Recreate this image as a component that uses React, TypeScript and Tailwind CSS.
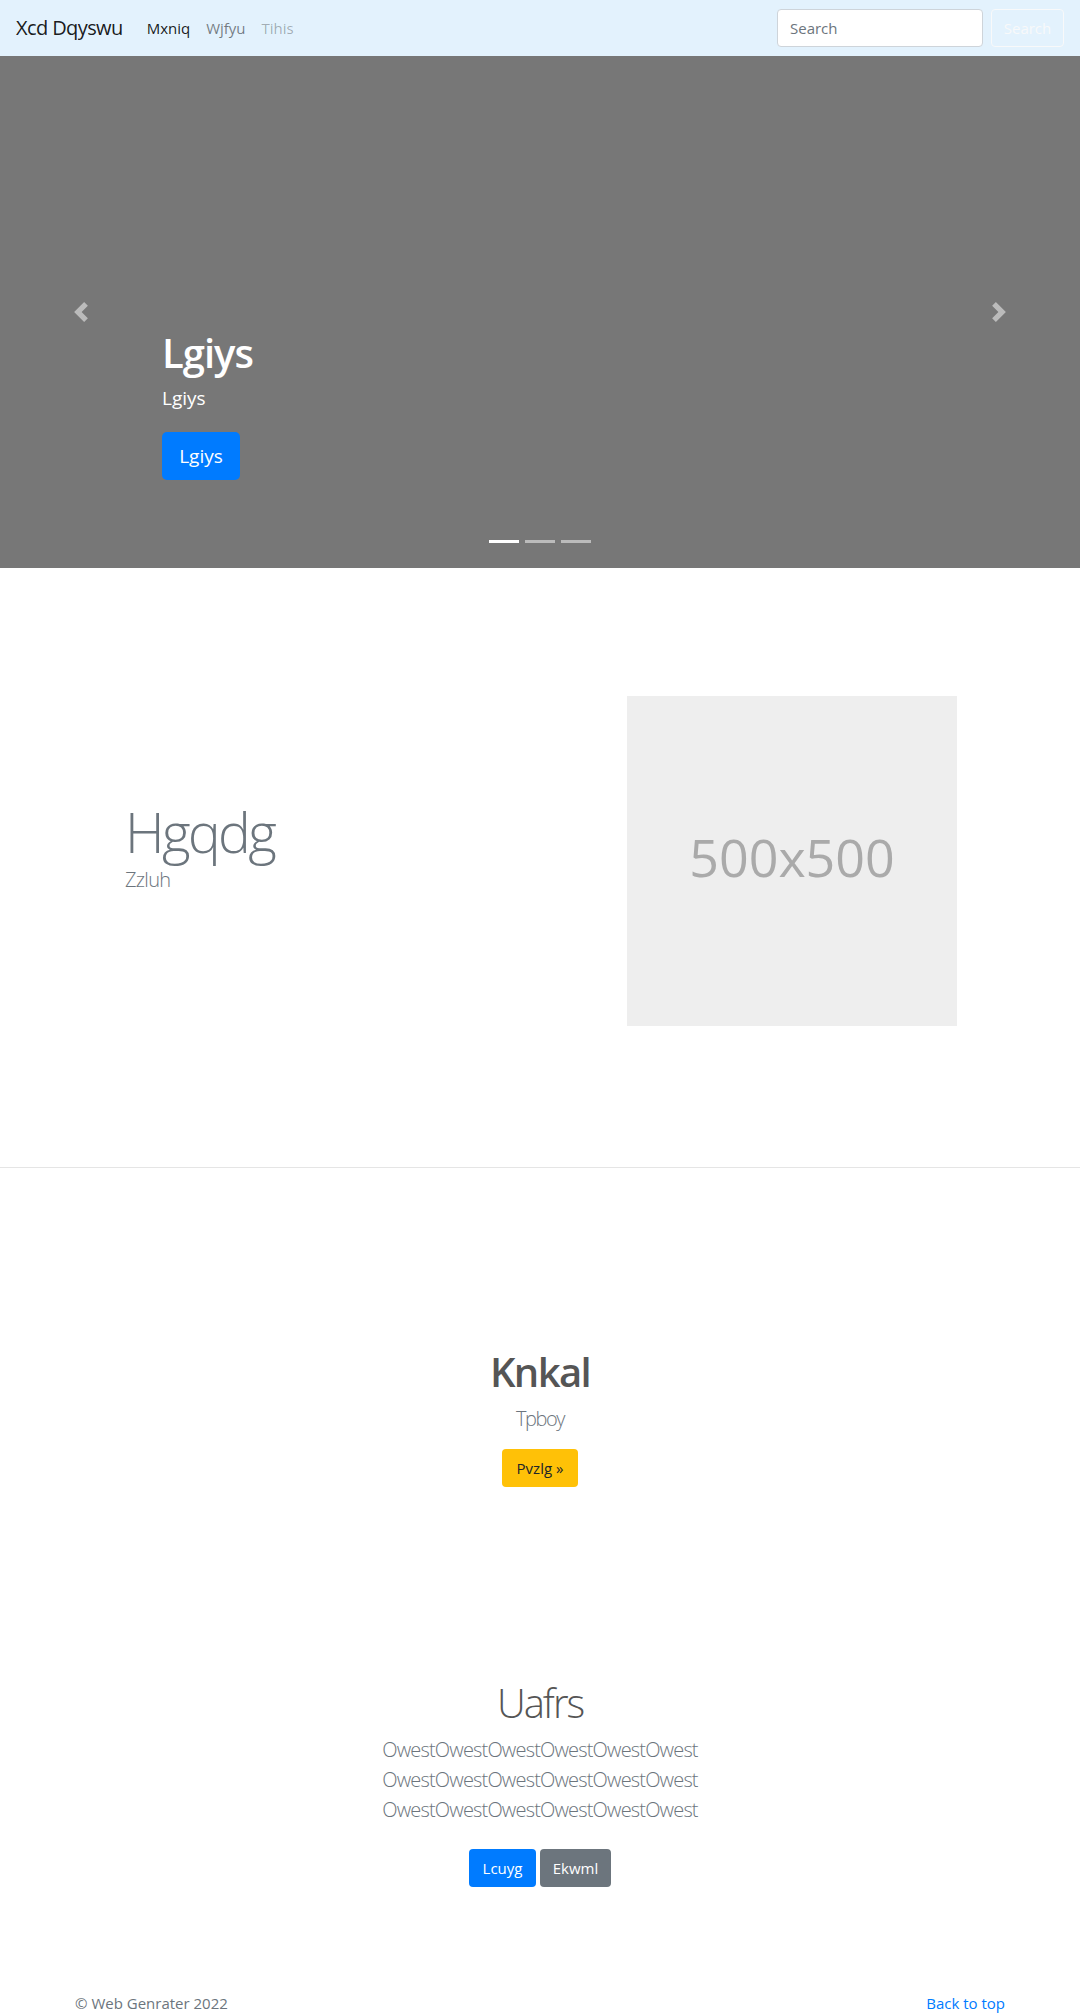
const font = "font-['Open_Sans','Noto_Sans',sans-serif]";

const Chevron = ({ dir }: { dir: "prev" | "next" }) => (
  <svg viewBox="0 0 8 8" className="w-5 h-5 fill-white opacity-50">
    <path
      d={
        dir === "prev"
          ? "M5.25 0l-4 4 4 4 1.5-1.5L4.25 4l2.5-2.5L5.25 0z"
          : "M2.75 0l-1.5 1.5L3.75 4l-2.5 2.5L2.75 8l4-4-4-4z"
      }
    />
  </svg>
);

export default function App() {
  return (
    <div className={`${font} bg-white text-[#212529] text-base min-h-[2014px]`}>
      {/* navbar */}
      <nav className="flex items-center h-14 px-4 bg-[#e3f2fd]">
        <span className="text-xl tracking-[-0.6px] text-black/90 mr-4">Xcd Dqyswu</span>
        <div className="flex">
          <a className="px-2 text-[15px] text-black/90">Mxniq</a>
          <a className="px-2 text-[15px] text-black/50">Wjfyu</a>
          <a className="px-2 text-[15px] text-black/30">Tihis</a>
        </div>
        <div className="flex items-center ml-auto">
          <div className="flex items-center w-[206px] h-[38px] px-3 bg-white border border-[#ced4da] rounded text-[15px] text-[#6c757d]">
            Search
          </div>
          <button className="ml-2 w-[73px] h-[38px] border border-[#f8f9fa] rounded text-[15px] text-[#f8f9fa]">
            Search
          </button>
        </div>
      </nav>

      {/* carousel */}
      <div className="relative h-[512px] bg-[#777]">
        <div className="absolute left-0 top-0 bottom-0 w-[162px] flex items-center justify-center">
          <Chevron dir="prev" />
        </div>
        <div className="absolute right-0 top-0 bottom-0 w-[162px] flex items-center justify-center">
          <Chevron dir="next" />
        </div>
        <div className="pl-[162px] pt-[273px] text-white">
          <h1 className="text-[40px] leading-[48px] font-semibold tracking-[-1px] mb-[7px]">Lgiys</h1>
          <p className="text-[19px] leading-[28px] mb-[20px]">Lgiys</p>
          <button className="w-[78px] h-12 bg-[#007bff] rounded-[5px] text-[19px] text-white">
            Lgiys
          </button>
        </div>
        <div className="absolute bottom-[25px] left-0 right-0 flex justify-center gap-[6px]">
          <span className="w-[30px] h-[3px] bg-white" />
          <span className="w-[30px] h-[3px] bg-white/50" />
          <span className="w-[30px] h-[3px] bg-white/50" />
        </div>
      </div>

      {/* featurette */}
      <section className="flex items-start h-[600px] border-b border-[#e5e5e5]">
        <div className="flex-1 pl-[125px] pt-[230px] text-[#6c757d]">
          <h2 className="text-[55px] leading-[67px] font-light tracking-[-2.6px]">Hgqdg</h2>
          <p className="text-xl leading-[30px] font-light tracking-[-0.7px]">Zzluh</p>
        </div>
        <div className="mt-[128px] mr-[123px] w-[330px] h-[330px] pb-[8px] bg-[#eee] flex items-center justify-center text-[#aaa] text-[52px]">
          500x500
        </div>
      </section>

      {/* callout */}
      <section className="flex flex-col items-center pt-[180px]">
        <h1 className="text-[40px] leading-[48px] font-semibold tracking-[-1.6px] text-[#555] mb-[8px]">Knkal</h1>
        <p className="text-xl leading-[30px] font-light tracking-[-1.4px] text-[#6c757d] mb-[15px]">Tpboy</p>
        <button className="w-[76px] h-[38px] bg-[#ffc107] rounded text-[15px] text-[#212529]">
          Pvzlg »
        </button>
      </section>

      {/* jumbotron */}
      <section className="flex flex-col items-center pt-[192px]">
        <h1 className="text-[40px] leading-[48px] font-light tracking-[-2px] text-[#555] mb-[8px]">Uafrs</h1>
        <p className="text-xl leading-[30px] font-light tracking-[-0.83px] text-[#6c757d] text-center mb-[24px]">
          OwestOwestOwestOwestOwestOwest
          <br />
          OwestOwestOwestOwestOwestOwest
          <br />
          OwestOwestOwestOwestOwestOwest
        </p>
        <div className="flex gap-1">
          <button className="w-[67px] h-[38px] bg-[#007bff] rounded text-[15px] text-white">Lcuyg</button>
          <button className="w-[71px] h-[38px] bg-[#6c757d] rounded text-[15px] text-white">Ekwml</button>
        </div>
      </section>

      {/* footer */}
      <footer className="flex justify-between mx-[75px] mt-[104px] text-[15px] leading-6 text-[#6c757d]">
        <span>© Web Genrater 2022</span>
        <a className="text-[#007bff]">Back to top</a>
      </footer>
    </div>
  );
}
